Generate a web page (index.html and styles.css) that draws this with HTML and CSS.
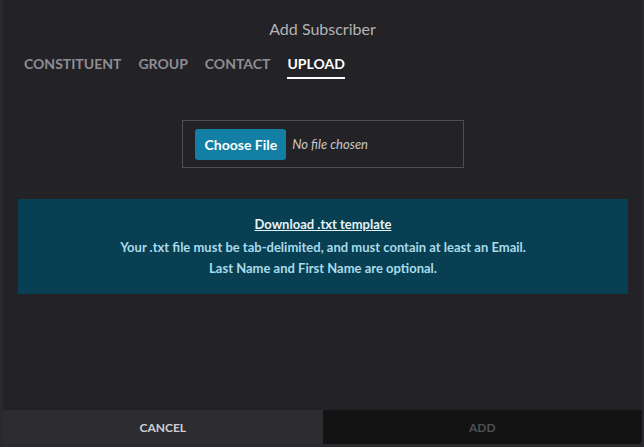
FILE: index.html
```html
<!DOCTYPE html>
<html lang="en">
<head>
    <meta charset="UTF-8">
    <meta name="viewport" content="width=device-width, initial-scale=1.0">
    <title>Add Subscriber</title>
    <link rel="stylesheet" href="styles.css">
</head>
<body>
    <div class="dialog">
        <div class="dialog-body">
            <h1 class="title">Add Subscriber</h1>
            <div class="tabs">
                <span class="tab">Constituent</span>
                <span class="tab">Group</span>
                <span class="tab">Contact</span>
                <span class="tab active">Upload</span>
            </div>
            <div class="file-row">
                <div class="file-box">
                    <span class="file-btn">Choose File</span>
                    <span class="file-name">No file chosen</span>
                </div>
            </div>
            <div class="info">
                <a class="info-link" href="#">Download .txt template</a>
                <p>Your .txt file must be tab-delimited, and must contain at least an Email.<br>Last Name and First Name are optional.</p>
            </div>
        </div>
        <div class="footer">
            <button class="btn cancel">Cancel</button>
            <button class="btn add">Add</button>
        </div>
    </div>
</body>
</html>
```

FILE: styles.css
```css
body {
    margin: 0;
    padding: 0;
    background: #2a2a2e;
    font-family: 'Lato', 'Liberation Sans', sans-serif;
}
.dialog {
    margin: 0 2px 0 3px;
    height: 444px;
    background: #232227;
    border-radius: 0 0 4px 4px;
    display: flex;
    flex-direction: column;
    overflow: hidden;
}
.dialog-body {
    flex: 1;
}
.title {
    margin: 0;
    padding-top: 18px;
    height: 21px;
    font-size: 16px;
    font-weight: normal;
    line-height: 21px;
    text-align: center;
    color: #b4b4b4;
}
.tabs {
    display: flex;
    gap: 17px;
    padding: 16px 0 0 21px;
}
.tab {
    font-size: 14px;
    font-weight: bold;
    text-transform: uppercase;
    color: #8e8e92;
    line-height: 18px;
    padding-bottom: 4px;
    border-bottom: 2px solid transparent;
}
.tab.active {
    color: #ffffff;
    border-bottom-color: #ffffff;
}
.file-row {
    display: flex;
    justify-content: center;
    margin-top: 41px;
}
.file-box {
    width: 256px;
    height: 32px;
    padding: 7px 12px;
    border: 1px solid #4f4e53;
    display: flex;
    align-items: center;
    gap: 6px;
}
.file-btn {
    background: #137fa4;
    color: #ffffff;
    font-size: 14px;
    font-weight: bold;
    border-radius: 3px;
    height: 31px;
    line-height: 31px;
    padding: 0 9px 0 10px;
}
.file-name {
    font-size: 13px;
    font-style: italic;
    color: #c8c8c8;
}
.info {
    margin: 31px 14px 0 15px;
    height: 95px;
    background: #083f52;
    text-align: center;
    box-sizing: border-box;
    padding-top: 14px;
}
.info-link {
    font-size: 13px;
    font-weight: bold;
    color: #e6f3f7;
    text-decoration: underline;
    line-height: 18px;
}
.info p {
    margin: 4px 0 0;
    font-size: 13px;
    font-weight: bold;
    line-height: 21px;
    color: #a9dbeb;
}
.footer {
    display: flex;
    height: 34px;
}
.btn {
    flex: 1;
    border: none;
    margin: 0;
    font-family: inherit;
    font-size: 12px;
    font-weight: bold;
    text-transform: uppercase;
}
.cancel {
    background: #2d2c31;
    color: #cfcfd2;
}
.add {
    background: #131313;
    color: #505053;
}
```
